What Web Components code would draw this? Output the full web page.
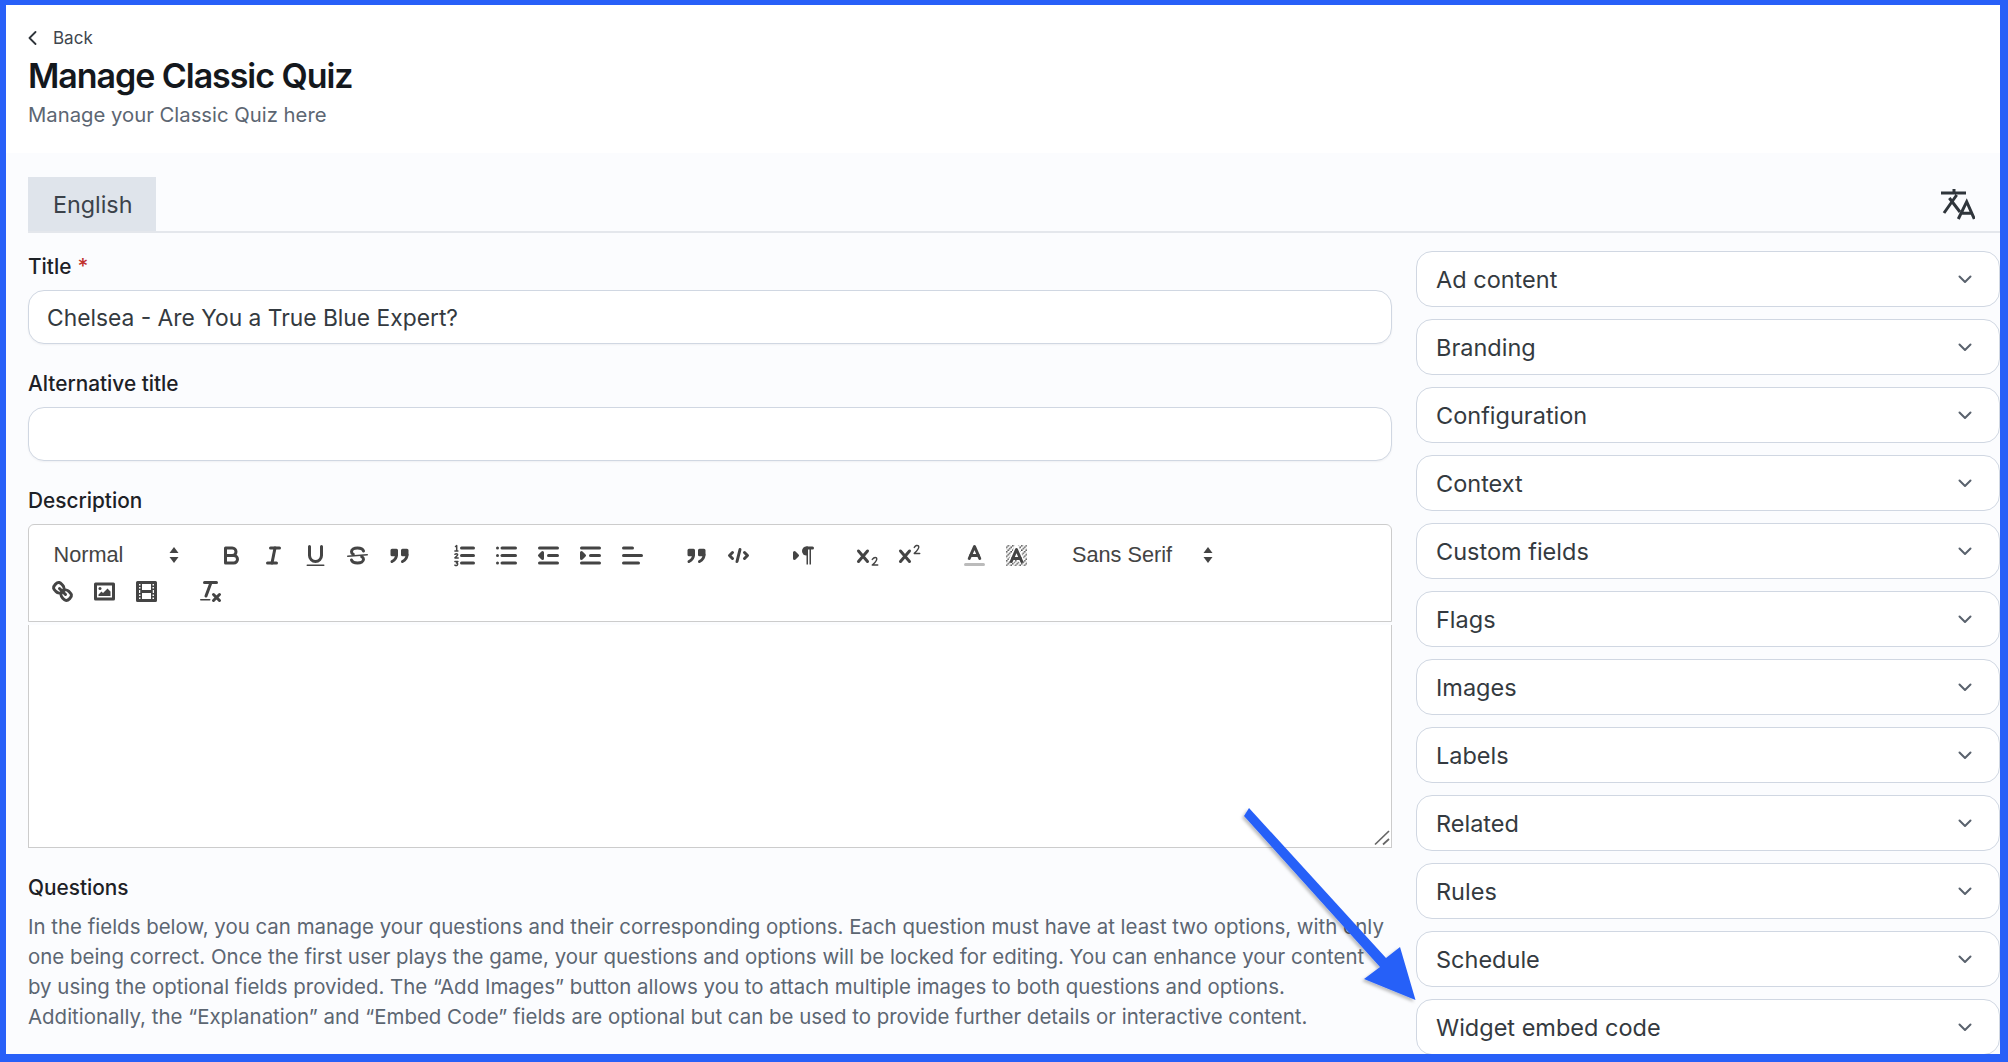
<!DOCTYPE html>
<html lang="en">
<head>
<meta charset="utf-8">
<title>Manage Classic Quiz</title>
<style>
  html, body { margin: 0; height: 100%; overflow: hidden; background: #2860f8; }
  body { font-family: Inter, "Liberation Sans", sans-serif; }
</style>
</head>
<body>
<quiz-page>
  <page-header slot="header" back="Back" heading="Manage Classic Quiz" sub="Manage your Classic Quiz here"></page-header>
  <lang-tabs slot="tabs">English</lang-tabs>
  <form-field slot="main" label="Title" required value="Chelsea - Are You a True Blue Expert?"></form-field>
  <form-field slot="main" label="Alternative title"></form-field>
  <rich-editor slot="main" label="Description"></rich-editor>
  <help-block slot="main" heading="Questions">In the fields below, you can manage your questions and their corresponding options. Each question must have at least two options, with only one being correct. Once the first user plays the game, your questions and options will be locked for editing. You can enhance your content by using the optional fields provided. The “Add Images” button allows you to attach multiple images to both questions and options. Additionally, the “Explanation” and “Embed Code” fields are optional but can be used to provide further details or interactive content.</help-block>
  <accordion-item slot="side">Ad content</accordion-item>
  <accordion-item slot="side">Branding</accordion-item>
  <accordion-item slot="side">Configuration</accordion-item>
  <accordion-item slot="side">Context</accordion-item>
  <accordion-item slot="side">Custom fields</accordion-item>
  <accordion-item slot="side">Flags</accordion-item>
  <accordion-item slot="side">Images</accordion-item>
  <accordion-item slot="side">Labels</accordion-item>
  <accordion-item slot="side">Related</accordion-item>
  <accordion-item slot="side">Rules</accordion-item>
  <accordion-item slot="side">Schedule</accordion-item>
  <accordion-item slot="side">Widget embed code</accordion-item>
</quiz-page>
<script>
// quill-style toolbar icons, 18x18 viewBox
const ICONS = {
  bold: '<path class="s" d="M5,4H9.5A2.5,2.5,0,0,1,12,6.5v0A2.5,2.5,0,0,1,9.5,9H5V4Z"/><path class="s" d="M5,9h5.5A2.5,2.5,0,0,1,13,11.5v0A2.5,2.5,0,0,1,10.5,14H5V9Z"/>',
  italic: '<line class="s" x1="7" x2="13" y1="4" y2="4"/><line class="s" x1="5" x2="11" y1="14" y2="14"/><line class="s" x1="8" x2="10" y1="14" y2="4"/>',
  underline: '<path class="s" d="M5,3V9a4,4,0,0,0,4,4H9a4,4,0,0,0,4-4V3"/><rect class="f" height="1" rx=".5" ry=".5" width="12" x="3" y="15"/>',
  strike: '<line class="s t" x1="15.5" x2="2.5" y1="8.5" y2="9.5"/><path class="s" d="M13,6C12.6,4.8,11,4,9,4,6.6,4,5,5.1,5,6.5c0,.8.4,1.4,1.2,1.8"/><path class="s" d="M5,12C5.4,13.2,7,14,9,14c2.4,0,4-1.1,4-2.5,0-.8-.4-1.4-1.2-1.8"/>',
  quote: '<rect class="s f" height="3" width="3" x="4" y="5.5"/><rect class="s f" height="3" width="3" x="11" y="5.5"/><path class="s" d="M7,8.5c0,2.2-1.2,3.6-3,4.5"/><path class="s" d="M14,8.5c0,2.2-1.2,3.6-3,4.5"/>',
  code: '<polyline class="s" points="5 7 3 9 5 11"/><polyline class="s" points="13 7 15 9 13 11"/><line class="s" x1="10" x2="8" y1="5" y2="13"/>',
  ol: '<line class="s" x1="7" x2="15" y1="4" y2="4"/><line class="s" x1="7" x2="15" y1="9" y2="9"/><line class="s" x1="7" x2="15" y1="14" y2="14"/><path class="s t" d="M3,3l.8-.6V6M2.6,6H4.6"/><path class="s t" d="M2.6,8.2Q3.6,7.4,4.4,8.2Q4.6,9,2.6,10.6H4.8"/><path class="s t" d="M2.6,13H4.6L3.6,14H4.2Q4.8,14.6,4.2,15.4Q3.4,16,2.6,15.4"/>',
  ul: '<line class="s" x1="6" x2="15" y1="4" y2="4"/><line class="s" x1="6" x2="15" y1="9" y2="9"/><line class="s" x1="6" x2="15" y1="14" y2="14"/><line class="s" x1="3" x2="3" y1="4" y2="4"/><line class="s" x1="3" x2="3" y1="9" y2="9"/><line class="s" x1="3" x2="3" y1="14" y2="14"/>',
  outdent: '<line class="s" x1="3" x2="15" y1="14" y2="14"/><line class="s" x1="3" x2="15" y1="4" y2="4"/><line class="s" x1="9" x2="15" y1="9" y2="9"/><polygon class="s f" points="5 7 5 11 3 9 5 7"/>',
  indent: '<line class="s" x1="3" x2="15" y1="14" y2="14"/><line class="s" x1="3" x2="15" y1="4" y2="4"/><line class="s" x1="9" x2="15" y1="9" y2="9"/><polygon class="s f" points="3 7 3 11 5 9 3 7"/>',
  align: '<line class="s" x1="3" x2="15" y1="9" y2="9"/><line class="s" x1="3" x2="13" y1="14" y2="14"/><line class="s" x1="3" x2="9" y1="4" y2="4"/>',
  rtl: '<polygon class="s f" points="3 11 5 9 3 7 3 11"/><line class="s f" x1="15" x2="11" y1="4" y2="4"/><path class="f" d="M11,3a3,3,0,0,0,0,6h1V3H11Z"/><rect class="f" height="11" width="1" x="11" y="4"/><rect class="f" height="11" width="1" x="13" y="4"/>',
  sub: '<path class="s" d="M3,6L9,13M9,6L3,13"/><path class="s t" d="M12.2,11.6Q13.6,9.8,15,10.6Q16,11.8,12.2,15.4H15.8"/>',
  sup: '<path class="s" d="M3,6L9,13M9,6L3,13"/><path class="s t" d="M12.2,3.6Q13.6,1.6,15,2.6Q16,3.8,12.2,7.6H15.8"/>',
  color: '<line class="s bar" x1="3" x2="15" y1="15" y2="15"/><polyline class="s" points="5.5 11 9 3 12.5 11"/><line class="s" x1="11.63" x2="6.38" y1="9" y2="9"/>',
  background: '<defs><pattern id="hatch" width="3" height="3" patternUnits="userSpaceOnUse"><rect x="0" y="2" width="1" height="1" fill="#444"/><rect x="1" y="1" width="1" height="1" fill="#444"/><rect x="2" y="0" width="1" height="1" fill="#444"/></pattern></defs><rect x="2" y="2" width="14" height="14" fill="url(#hatch)"/><polyline class="halo" points="5.5 13 9 5 12.5 13"/><polyline class="s" points="5.5 13 9 5 12.5 13"/><line class="s" x1="11.63" x2="6.38" y1="11" y2="11"/>',
  link: '<line class="s" x1="7" x2="11" y1="7" y2="11"/><path class="s" d="M8.9,4.577a3.476,3.476,0,0,1,.36,4.679A3.476,3.476,0,0,1,4.577,8.9C3.185,7.5,2.035,6.4,4.217,4.217S7.5,3.185,8.9,4.577Z"/><path class="s" d="M13.423,9.1a3.476,3.476,0,0,0-4.679-.36,3.476,3.476,0,0,0,.36,4.679c1.392,1.392,2.5,2.542,4.679.36S14.815,10.5,13.423,9.1Z"/>',
  image: '<rect class="s" height="10" width="12" x="3" y="4"/><circle class="f" cx="6" cy="7" r="1"/><polyline class="f" points="5 12 5 11 7 9 8 10 11 7 13 9 13 12 5 12"/>',
  video: '<rect class="s" height="12" width="12" x="3" y="3"/><rect class="f" height="12" width="1" x="5" y="3"/><rect class="f" height="12" width="1" x="12" y="3"/><rect class="f" height="2" width="8" x="5" y="8"/><rect class="f" height="1" width="3" x="3" y="5"/><rect class="f" height="1" width="3" x="3" y="7"/><rect class="f" height="1" width="3" x="3" y="10"/><rect class="f" height="1" width="3" x="3" y="12"/><rect class="f" height="1" width="3" x="12" y="5"/><rect class="f" height="1" width="3" x="12" y="7"/><rect class="f" height="1" width="3" x="12" y="10"/><rect class="f" height="1" width="3" x="12" y="12"/>',
  clean: '<line class="s" x1="5" x2="13" y1="3" y2="3"/><line class="s" x1="6" x2="9.35" y1="12" y2="3"/><line class="s" x1="11" x2="15" y1="11" y2="15"/><line class="s" x1="15" x2="11" y1="11" y2="15"/><rect class="f" height="1" rx=".5" ry=".5" width="7" x="2" y="14"/>'
};

class QuizPage extends HTMLElement {
  connectedCallback() {
    this.attachShadow({ mode: 'open' });
    this.shadowRoot.innerHTML = `
      <style>
        :host { display: block; height: 100vh; box-sizing: border-box; padding: 5px 8px 8px 6px; }
        .frame { position: relative; height: 100%; overflow: hidden; background: #fff; display: flex; flex-direction: column; }
        .panel { flex: 1; background: #fbfcfe; padding: 24px 0 0 22px; min-height: 0; }
        .columns { display: grid; grid-template-columns: 1364px 584px; column-gap: 24px; padding-top: 18px; }
        .main { display: flex; flex-direction: column; padding-top: 1px; }
        .side { display: flex; flex-direction: column; gap: 12px; }
        .arrow { position: absolute; left: 0; top: 0; pointer-events: none; }
      </style>
      <div class="frame">
        <slot name="header"></slot>
        <div class="panel">
          <slot name="tabs"></slot>
          <div class="columns">
            <div class="main"><slot name="main"></slot></div>
            <div class="side"><slot name="side"></slot></div>
          </div>
        </div>
        <svg class="arrow" width="1994" height="1049" viewBox="6 5 1994 1049" xmlns="http://www.w3.org/2000/svg">
          <defs><filter id="sh" x="-20%" y="-20%" width="140%" height="140%"><feDropShadow dx="-2" dy="2" stdDeviation="1.5" flood-color="#000" flood-opacity=".25"/></filter></defs>
          <polygon filter="url(#sh)" fill="#2860f8" points="1244,816 1249,808 1386,958 1400,947 1415.5,1000 1364,979 1380,967"/>
        </svg>
      </div>
    `;
  }
}

class PageHeader extends HTMLElement {
  connectedCallback() {
    this.attachShadow({ mode: 'open' });
    this.shadowRoot.innerHTML = `
      <style>
        :host { display: block; height: 148px; box-sizing: border-box; padding: 23px 0 0 22px; }
        .back { display: flex; align-items: center; gap: 16px; font-size: 17px; line-height: 20px; color: #3f464e; }
        .back svg { display: block; }
        h1 { margin: 6px 0 0; font-size: 34px; line-height: 44px; font-weight: 600; letter-spacing: -1.05px; color: #14181d; }
        p { margin: 3px 0 0; font-size: 20.3px; line-height: 28px; color: #5c6672; }
      </style>
      <div class="back">
        <svg width="9" height="14" viewBox="0 0 9 14" fill="none" stroke="#2f353b" stroke-width="1.8" stroke-linecap="round" stroke-linejoin="round"><polyline points="7.5 1 1.5 7 7.5 13"/></svg>
        <span>${this.getAttribute('back')}</span>
      </div>
      <h1>${this.getAttribute('heading')}</h1>
      <p>${this.getAttribute('sub')}</p>
    `;
  }
}

class LangTabs extends HTMLElement {
  connectedCallback() {
    this.attachShadow({ mode: 'open' });
    this.shadowRoot.innerHTML = `
      <style>
        :host { display: flex; justify-content: space-between; align-items: stretch; height: 56px; box-sizing: border-box; border-bottom: 2px solid #e4e7ec; }
        .tab { width: 128px; box-sizing: border-box; padding-left: 25px; background: #dfe4eb; display: flex; align-items: center; font-size: 23.3px; color: #3b424a; }
        svg { align-self: flex-start; margin: 12px 25px 0 0; }
      </style>
      <div class="tab"><slot></slot></div>
      <svg width="34" height="31" viewBox="0 0 34 31" fill="none" stroke="#2f353b" stroke-width="3">
        <path d="M0,4H25M13,0V4M15.7,6L3,24M8.3,9L19,23"/>
        <path d="M17.3,30L25.7,12.7L33.3,30M20.5,24.3H30.5"/>
      </svg>
    `;
  }
}

class FormField extends HTMLElement {
  connectedCallback() {
    this.attachShadow({ mode: 'open' });
    const req = this.hasAttribute('required') ? '<span class="req">*</span>' : '';
    this.shadowRoot.innerHTML = `
      <style>
        :host { display: block; height: 117px; }
        label { display: block; font-size: 20.8px; line-height: 30px; font-weight: 450; color: #1d2126; margin-bottom: 8px; }
        .req { color: #c0302b; margin-left: 6px; }
        .input { height: 54px; box-sizing: border-box; border: 1.5px solid #d0d7e2; border-radius: 16px; background: #fff; padding: 0 18px; display: flex; align-items: center; font-size: 22.8px; color: #343a40; box-shadow: 0 1px 2px rgba(16, 24, 40, .05); }
      </style>
      <label>${this.getAttribute('label')}${req}</label>
      <div class="input">${this.getAttribute('value') || ''}</div>
    `;
  }
}

class TbButton extends HTMLElement {
  connectedCallback() {
    this.attachShadow({ mode: 'open' });
    this.shadowRoot.innerHTML = `
      <style>
        :host { display: flex; width: 42px; height: 36px; align-items: center; justify-content: center; }
        svg { width: 27px; height: 27px; display: block; }
        .s { fill: none; stroke: #444; stroke-width: 2; stroke-linecap: round; stroke-linejoin: round; }
        .f { fill: #444; }
        .s.f { fill: #444; }
        .t { stroke-width: 1; }
        .bar { stroke: #bbb; }
        .halo { fill: none; stroke: #fff; stroke-width: 4; }
      </style>
      <svg viewBox="0 0 18 18">${ICONS[this.getAttribute('icon')]}</svg>
    `;
  }
}

class TbPicker extends HTMLElement {
  connectedCallback() {
    this.attachShadow({ mode: 'open' });
    this.shadowRoot.innerHTML = `
      <style>
        :host { display: flex; width: var(--w, 147px); height: 36px; box-sizing: border-box; padding: 0 0 0 12.5px; align-items: center; justify-content: space-between; font-family: "Liberation Sans", sans-serif; font-size: 21.7px; color: #444; }
        svg { margin-right: 8px; display: block; }
      </style>
      <slot></slot>
      <svg width="12" height="18" viewBox="0 0 12 18"><polygon fill="#444" points="6 1 10.5 7 1.5 7"/><polygon fill="#444" points="6 17 10.5 11 1.5 11"/></svg>
    `;
  }
}

class RichEditor extends HTMLElement {
  connectedCallback() {
    this.attachShadow({ mode: 'open' });
    const btn = names => names.map(n => `<tb-button icon="${n}"></tb-button>`).join('');
    this.shadowRoot.innerHTML = `
      <style>
        :host { display: block; }
        label { display: block; font-size: 20.8px; line-height: 30px; font-weight: 450; color: #1d2126; margin-bottom: 8px; }
        .toolbar { box-sizing: border-box; height: 98px; border: 1px solid #ccc; border-radius: 6px 6px 0 0; background: #fff; padding: 12px; display: flex; flex-wrap: wrap; align-content: flex-start; }
        .group { display: flex; margin-right: 22.5px; }
        .break { flex-basis: 100%; height: 0; }
        .body { position: relative; box-sizing: border-box; height: 223px; margin-top: 3px; background: #fff; border: 1px solid #ccc; border-top: 0; }
        .grip { position: absolute; right: 1px; bottom: 1px; display: block; }
      </style>
      <label>${this.getAttribute('label')}</label>
      <div class="toolbar">
        <div class="group"><tb-picker>Normal</tb-picker></div>
        <div class="group">${btn(['bold', 'italic', 'underline', 'strike', 'quote'])}</div>
        <div class="group">${btn(['ol', 'ul', 'outdent', 'indent', 'align'])}</div>
        <div class="group">${btn(['quote', 'code'])}</div>
        <div class="group">${btn(['rtl'])}</div>
        <div class="group">${btn(['sub', 'sup'])}</div>
        <div class="group">${btn(['color', 'background'])}</div>
        <div class="group"><tb-picker style="--w:162px">Sans Serif</tb-picker></div>
        <div class="break"></div>
        <div class="group">${btn(['link', 'image', 'video'])}</div>
        <div class="group">${btn(['clean'])}</div>
      </div>
      <div class="body">
        <svg class="grip" width="16" height="16" viewBox="0 0 16 16" stroke="#666" stroke-width="1.7"><line x1="1" y1="14.5" x2="15" y2="1"/><line x1="9" y1="14.5" x2="15" y2="9"/></svg>
      </div>
    `;
  }
}

class HelpBlock extends HTMLElement {
  connectedCallback() {
    this.attachShadow({ mode: 'open' });
    this.shadowRoot.innerHTML = `
      <style>
        :host { display: block; margin-top: 26px; }
        h3 { margin: 0 0 10px; font-size: 20.8px; line-height: 28px; font-weight: 450; color: #1d2126; }
        p { margin: 0; width: 1360px; font-size: 20.45px; line-height: 30px; color: #5c6672; }
      </style>
      <h3>${this.getAttribute('heading')}</h3>
      <p><slot></slot></p>
    `;
  }
}

class AccordionItem extends HTMLElement {
  connectedCallback() {
    this.attachShadow({ mode: 'open' });
    this.shadowRoot.innerHTML = `
      <style>
        :host { display: flex; height: 56px; box-sizing: border-box; align-items: center; justify-content: space-between; padding: 0 27px 0 19px; background: #fff; border: 1.5px solid #d0d7e2; border-radius: 16px; font-size: 23.5px; color: #343a40; }
        svg { display: block; }
      </style>
      <span><slot></slot></span>
      <svg width="14" height="9" viewBox="0 0 14 9" fill="none" stroke="#59626d" stroke-width="2" stroke-linecap="round" stroke-linejoin="round"><polyline points="1.5 1.5 7 7 12.5 1.5"/></svg>
    `;
  }
}

customElements.define('tb-button', TbButton);
customElements.define('tb-picker', TbPicker);
customElements.define('page-header', PageHeader);
customElements.define('lang-tabs', LangTabs);
customElements.define('form-field', FormField);
customElements.define('rich-editor', RichEditor);
customElements.define('help-block', HelpBlock);
customElements.define('accordion-item', AccordionItem);
customElements.define('quiz-page', QuizPage);
</script>
</body>
</html>
